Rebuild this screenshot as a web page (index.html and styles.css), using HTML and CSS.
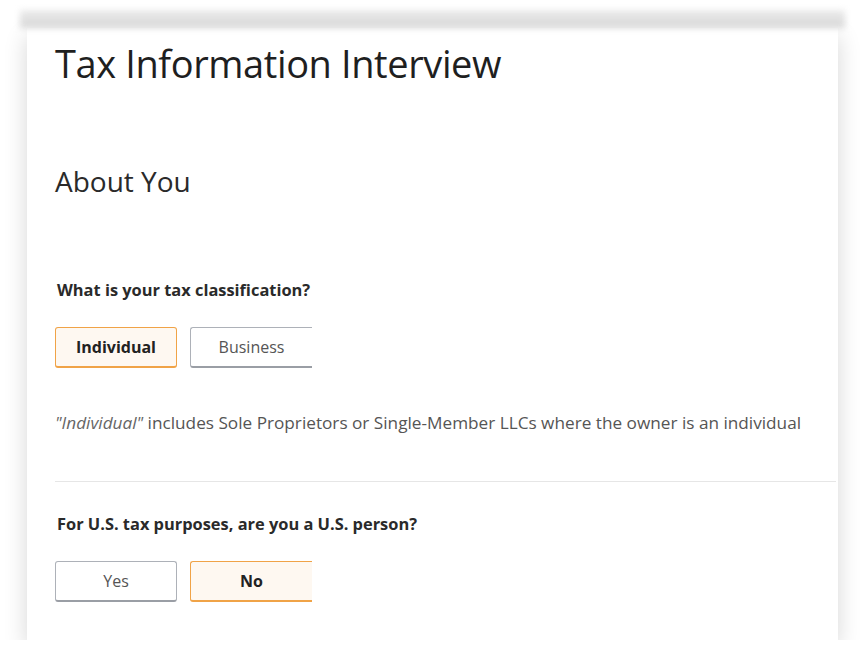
FILE: index.html
```html
<!DOCTYPE html>
<html>
<head>
    <title>Tax Information Interview</title>
<link rel="stylesheet" href="styles.css">
</head>
<body>
  <div class="frame">
    <div class="topbar"></div>
    <div class="card">
      <h1 class="title">Tax Information Interview</h1>
      <h2 class="section">About You</h2>

      <div class="question">What is your tax classification?</div>
      <div class="choices">
        <button type="button" class="choice selected">Individual</button>
        <button type="button" class="choice cut">Business</button>
      </div>
      <p class="note"><i>"Individual"</i> includes Sole Proprietors or Single-Member LLCs where the owner is an individual</p>

      <hr class="divider">

      <div class="question">For U.S. tax purposes, are you a U.S. person?</div>
      <div class="choices">
        <button type="button" class="choice">Yes</button>
        <button type="button" class="choice selected cut">No</button>
      </div>
    </div>
  </div>
</body>
</html>
```

FILE: styles.css
```css
body {
  margin: 0;
  background-color: white;
  font-family: "Open Sans", "Noto Sans", sans-serif;
  color: #111;
}
.frame {
  width: 811px;
  margin-left: 27px;
  padding-top: 10px;
}
.topbar {
  height: 18px;
  margin: 0 -7px;
  background: linear-gradient(#ececec, #d6d6d6);
  filter: blur(3px);
}
.card {
  background-color: white;
  height: 612px;
  padding: 0 0 0 28px;
  box-shadow: 0 8px 22px rgba(0, 0, 0, 0.16);
}
.title {
  margin: 0;
  padding-top: 9px;
  font-size: 38px;
  font-weight: normal;
  letter-spacing: -0.4px;
  color: #1f1f1f;
}
.section {
  margin: 73px 0 0 0;
  font-size: 28px;
  font-weight: normal;
  color: #2a2a2a;
}
.question {
  margin-top: 78px;
  padding-left: 2px;
  font-size: 16.4px;
  font-weight: bold;
  color: #2a2a2a;
}
.choices {
  display: flex;
  gap: 13px;
  margin-top: 26px;
}
.choice {
  width: 122px;
  height: 41px;
  background-color: white;
  border: 1px solid #adb1b8;
  border-bottom: 2px solid #9a9ea5;
  border-radius: 3px;
  font-family: inherit;
  font-size: 16px;
  color: #555;
}
.choice.selected {
  background-color: #fef8f1;
  border-color: #f0a347;
  font-weight: bold;
  color: #222;
}
.choice.cut {
  border-right: none;
  border-radius: 3px 0 0 3px;
}
.note {
  margin: 43px 0 0 0;
  font-size: 17.2px;
  color: #555;
}
.note i {
  color: #666;
}
.divider {
  margin: 47px 2px 0 0;
  border: none;
  border-top: 1px solid #e6e6e6;
}
.divider + .question {
  margin-top: 30px;
}
```
